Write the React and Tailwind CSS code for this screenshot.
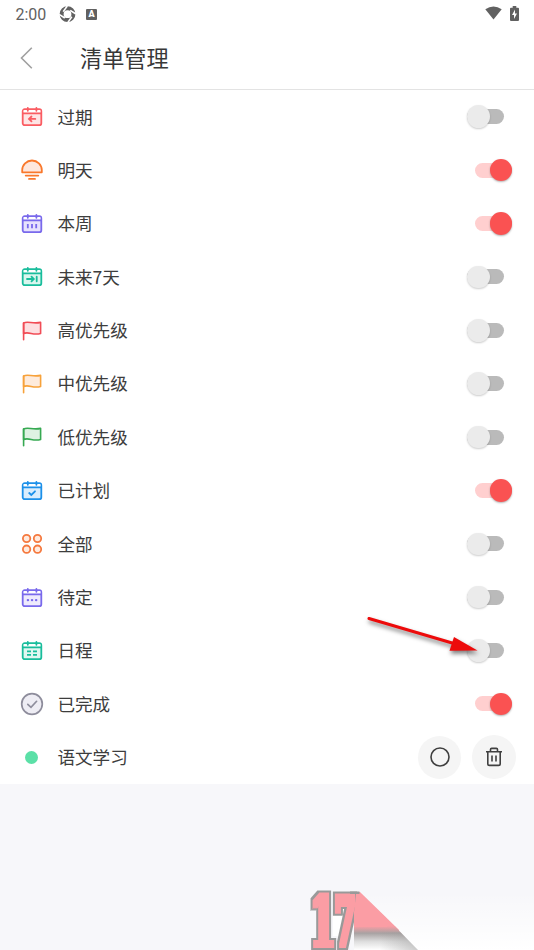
import React from "react";

function Calendar({ color, fill, children }) {
  return (
    <svg width="22" height="22" viewBox="0 0 22 22" fill="none" stroke={color} strokeWidth="1.8" strokeLinecap="round">
      <rect x="1.7" y="3.2" width="18.6" height="16" rx="2" fill={fill} />
      <rect x="2.6" y="4.1" width="16.8" height="2.6" fill="#fff" stroke="none" />
      <path d="M2 7.3H20M6.8 1.9V4.8M15.4 1.9V4.8" />
      {children}
    </svg>
  );
}

function Flag({ color, fill }) {
  return (
    <svg width="22" height="22" viewBox="0 0 22 22" fill="none" stroke={color} strokeWidth="1.6" strokeLinecap="round" strokeLinejoin="round">
      <path d="M2.6 3C7 .4 11.5 4.4 19.6 2.4V13.4C12 15.6 8.5 11.4 2.6 13.4Z" fill={fill} />
      <path d="M2.6 3V19.8" />
    </svg>
  );
}

const icons = {
  overdue: (
    <Calendar color="#fa5c62" fill="#fee5e5">
      <path d="M14.3 12.9H8M10.5 10.5L8 12.9l2.5 2.4" />
    </Calendar>
  ),
  tomorrow: (
    <svg width="22" height="22" viewBox="0 0 22 22" fill="none" stroke="#f9782c" strokeWidth="1.8" strokeLinecap="round">
      <path d="M1.2 13.3V11.1a9.8 9.6 0 0 1 19.6 0V13.3Z" fill="#fee7de" strokeLinejoin="round" />
      <path d="M4.7 16.6H17.3M8 19.9H14" />
    </svg>
  ),
  week: (
    <Calendar color="#7969ec" fill="#e7e2fd">
      <path d="M6.8 11V15.3M11 11V15.3M15.2 11V15.3" strokeLinecap="butt" />
    </Calendar>
  ),
  next7: (
    <Calendar color="#19bd9c" fill="#d9f6ee">
      <path d="M6 13H12.6M10.5 10.7L12.8 13 10.5 15.3M15.7 10.7V15.3" />
    </Calendar>
  ),
  high: <Flag color="#f14c56" fill="#fddfe1" />,
  medium: <Flag color="#f7a23b" fill="#feebdc" />,
  low: <Flag color="#36a952" fill="#def2e2" />,
  planned: (
    <Calendar color="#1c90e9" fill="#d9edfd">
      <path d="M8.2 13L10.3 15 14 11.3" />
    </Calendar>
  ),
  all: (
    <svg width="22" height="22" viewBox="0 0 22 22" fill="#ffeade" stroke="#f5793f" strokeWidth="1.8">
      <circle cx="5.6" cy="5.5" r="3.7" />
      <circle cx="16.5" cy="5.5" r="3.7" />
      <circle cx="5.6" cy="16.2" r="3.7" />
      <circle cx="16.5" cy="16.2" r="3.7" />
    </svg>
  ),
  pending: (
    <Calendar color="#7969ec" fill="#eeeafd">
      <path d="M6.9 13.1h.1M11 13.1h.1M15.1 13.1h.1" strokeWidth="2.4" />
    </Calendar>
  ),
  schedule: (
    <Calendar color="#19bd9c" fill="#e0f7f1">
      <path d="M6 11.3h4M12 11.3h4M6 14.9h4M12 14.9h4" strokeLinecap="butt" />
    </Calendar>
  ),
  done: (
    <svg width="24" height="24" viewBox="0 0 24 24" fill="none" stroke="#8e8d9c" strokeWidth="1.7" strokeLinecap="round">
      <circle cx="12" cy="12" r="10.3" fill="#eeedf4" />
      <path d="M7.8 12.4L11 15.4 16.6 9.3" />
    </svg>
  ),
};

const rows = [
  ["过期", "overdue", false],
  ["明天", "tomorrow", true],
  ["本周", "week", true],
  ["未来7天", "next7", false],
  ["高优先级", "high", false],
  ["中优先级", "medium", false],
  ["低优先级", "low", false],
  ["已计划", "planned", true],
  ["全部", "all", false],
  ["待定", "pending", false],
  ["日程", "schedule", false],
  ["已完成", "done", true],
];

function Toggle({ on }) {
  return on ? (
    <div className="mr-[22px] flex h-[15px] w-[37px] items-center justify-end rounded-full bg-[#ffcfcf]">
      <div className="size-[22.5px] shrink-0 rounded-full bg-[#fa5252] shadow-[0_1px_2px_rgba(0,0,0,0.3)]" />
    </div>
  ) : (
    <div className="mr-[30px] flex h-[15px] w-[37px] items-center rounded-full bg-[#bababa]">
      <div className="size-[22.5px] shrink-0 rounded-full bg-[#ebebeb] shadow-[0_1px_2px_rgba(0,0,0,0.2)]" />
    </div>
  );
}

function Row({ icon, label, children }) {
  return (
    <div className="flex h-[53.4px] items-center">
      <div className="ml-[20px] flex w-6 items-center justify-center pt-[0.6px]">{icon}</div>
      <div className="ml-[13.4px] flex-1 pb-[0.4px] text-[17.6px] leading-6 text-[#3d3d3d]">{label}</div>
      {children}
    </div>
  );
}

function StatusBar() {
  return (
    <div className="flex h-7 items-center text-[#616161]">
      <span className="ml-[15.5px] w-8 pt-px font-[Roboto] text-[16px] leading-5">2:00</span>
      <svg className="ml-[11.5px]" width="17" height="17" viewBox="0 0 17 17">
        <circle cx="8.5" cy="8.2" r="5.9" fill="none" stroke="#616161" strokeWidth="4" />
        <path d="M8.3 0L4.2 5.6M16.9 8L11.2 4.4M8.7 16.6L12.8 10.8M.1 8.4L5.8 12" stroke="#fff" strokeWidth="1.6" />
      </svg>
      <span className="ml-[10px] flex size-[11px] items-center justify-center rounded-[1px] bg-[#616161] font-[Roboto] text-[9px] font-black leading-none text-white">A</span>
      <svg className="-mt-[2px] ml-auto" width="17" height="14" viewBox="0 0 17 14">
        <path d="M8.5 13.5L.3 3.2Q8.5-2.2 16.7 3.2Z" fill="#616161" />
      </svg>
      <svg className="-mt-[2px] ml-2 mr-[15.5px]" width="9" height="15" viewBox="0 0 9 15">
        <path d="M1 1.7H2.7V0H6.3V1.7H8Q9 1.7 9 2.7V14Q9 15 8 15H1Q0 15 0 14V2.7Q0 1.7 1 1.7Z" fill="#616161" />
        <path d="M5 3.5L2 9H4V13L7 7.5H5Z" fill="#fff" />
      </svg>
    </div>
  );
}

function Watermark() {
  return (
    <svg className="absolute bottom-0 right-0" width="244" height="80" viewBox="0 0 244 80">
      <defs>
        <linearGradient id="fold" x1="0" y1="0" x2="0" y2="1">
          <stop offset="0" stopColor="#fb9da4" />
          <stop offset=".3" stopColor="#a8a2a2" />
          <stop offset=".65" stopColor="#dedede" />
          <stop offset="1" stopColor="#fff" />
        </linearGradient>
        <linearGradient id="edge" x1="0" y1="0" x2="1" y2="0">
          <stop offset=".4" stopColor="#9a9a9a" stopOpacity="0" />
          <stop offset="1" stopColor="#9a9a9a" stopOpacity=".5" />
        </linearGradient>
        <linearGradient id="glow" x1="0" y1="0" x2="0" y2="1">
          <stop offset="0" stopColor="#fff" stopOpacity="0" />
          <stop offset="1" stopColor="#fff" />
        </linearGradient>
        <filter id="block" x="-30%" y="-30%" width="160%" height="160%" colorInterpolationFilters="sRGB">
          <feMorphology in="SourceAlpha" operator="dilate" radius="2 2" result="inner" />
          <feMorphology in="SourceAlpha" operator="dilate" radius="4 4" result="outer" />
          <feFlood floodColor="#999" />
          <feComposite in2="outer" operator="in" result="gray" />
          <feFlood floodColor="#fb9da4" />
          <feComposite in2="inner" operator="in" result="pink" />
          <feMerge>
            <feMergeNode in="gray" />
            <feMergeNode in="pink" />
          </feMerge>
        </filter>
      </defs>
      <path d="M70 22H244V80H126Z" fill="url(#glow)" />
      <path d="M43 38H62V66H43Z" fill="#fff" />
      <path d="M66 22H70L109 60V62H64Z" fill="#fb9da4" />
      <path d="M64 56H104.500L128 80H64Z" fill="url(#fold)" />
      <path d="M64 62H110L128 80H64Z" fill="url(#edge)" />
      <g fontFamily="DejaVu Serif" fontWeight="bold" fontSize="69">
        <g filter="url(#block)">
          <text transform="translate(20 76) scale(.54 1)">1</text>
        </g>
        <g filter="url(#block)">
          <text transform="translate(44.500 76) scale(.44 1)">7</text>
        </g>
      </g>
      <path d="M66 24H71L97 49V57H64V42Z" fill="#fb9da4" />
      <path d="M60 21.500H69.500V24H60Z" fill="#999" />
    </svg>
  );
}

export default function App() {
  return (
    <div className="relative flex h-[950px] w-[534px] flex-col overflow-hidden bg-[#f7f7fa] font-['Noto_Sans_CJK_SC',sans-serif]">
      <div className="h-[90px] border-b border-[#e3e3e3] bg-white">
        <StatusBar />
        <div className="flex h-[60px] items-center">
          <svg className="ml-5" width="13" height="22" viewBox="0 0 13 22" fill="none" stroke="#a0a0a0" strokeWidth="1.6">
            <path d="M11.8.8L1.5 11 11.8 21.2" />
          </svg>
          <h1 className="ml-[47px] pb-[2px] text-[22.2px] leading-8 text-[#383838]">清单管理</h1>
        </div>
      </div>
      <div className="bg-white">
        {rows.map(([label, icon, on]) => (
          <Row key={label} icon={icons[icon]} label={label}>
            <Toggle on={on} />
          </Row>
        ))}
        <Row icon={<span className="mr-[1px] size-[13px] rounded-full bg-[#5be0a7]" />} label="语文学习">
          <button className="mr-[11px] flex size-[43px] items-center justify-center rounded-full bg-[#f5f5f5]">
            <svg width="20" height="20" viewBox="0 0 20 20" fill="none" stroke="#404040" strokeWidth="1.6">
              <circle cx="10" cy="10" r="9" />
            </svg>
          </button>
          <button className="mr-[18px] flex size-[44px] items-center justify-center rounded-full bg-[#f5f5f5]">
            <svg width="18" height="20" viewBox="0 0 18 20" fill="none" stroke="#404040" strokeWidth="1.6">
              <path d="M1 4.8H17M5.500 4.600V2.600Q5.500 1.400 6.700 1.400H11.300Q12.500 1.400 12.500 2.600V4.600M2.800 5V16.700Q2.800 18.400 4.500 18.400H13.500Q15.200 18.400 15.200 16.700V5M7 8.600V14.600M11 8.600V14.600" />
            </svg>
          </button>
        </Row>
      </div>
      <svg className="absolute left-[360px] top-[610px] drop-shadow-[1px_3px_2px_rgba(0,0,0,0.5)]" width="130" height="60" viewBox="0 0 130 60">
        <path d="M9 8.500L93 33.200" stroke="#ed0b0b" strokeWidth="3" strokeLinecap="round" />
        <path d="M117.500 40.500L94 27 92 33 89.500 40.800Z" fill="#ed0b0b" />
      </svg>
      <Watermark />
    </div>
  );
}
